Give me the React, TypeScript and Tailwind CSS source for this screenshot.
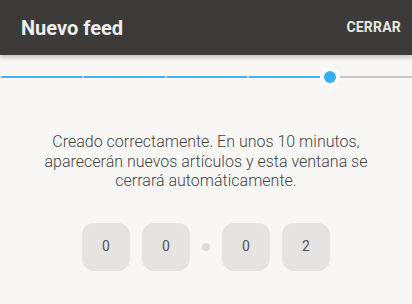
import React from 'react'

const SEGMENTS = 5
const DONE = 4
const DIGITS = ['0', '0', null, '0', '2']

export default function App() {
  return (
    <div
      className="w-[412px] h-[304px] bg-[#f8f7f6] overflow-hidden"
      style={{ fontFamily: 'Roboto, "Noto Sans", sans-serif' }}
    >
      {/* Header */}
      <div className="relative z-10 h-[55px] bg-[#3c3b39] flex items-center justify-between pl-[21px] pr-[11px] shadow-[0_2px_5px_rgba(0,0,0,0.25)]">
        <span className="text-[20px] font-bold text-[#eeeeee]">Nuevo feed</span>
        <span className="text-[14px] font-bold text-[#e6e6e6] tracking-[0.2px]">CERRAR</span>
      </div>

      {/* Progress */}
      <div className="relative mt-[21px] h-[2px] flex">
        {Array.from({ length: SEGMENTS }).map((_, i) => (
          <div key={i} className="flex-1 flex">
            <div className="w-[2px] bg-[#c8c6c4]" />
            <div className={i < DONE ? 'flex-1 bg-[#39b6f2]' : 'flex-1 bg-[#c8c6c4]'} />
          </div>
        ))}
        <div className="absolute left-[320px] top-[-9px] w-[20px] h-[20px] rounded-full bg-white flex items-center justify-center">
          <div className="w-[12px] h-[12px] rounded-full bg-[#35b0f0]" />
        </div>
      </div>

      {/* Message */}
      <p className="mt-[54px] text-center text-[16px] font-light leading-[19.5px] text-[#444] px-[30px]">
        Creado correctamente. En unos 10 minutos, aparecerán nuevos artículos y esta ventana se cerrará automáticamente.
      </p>

      {/* Countdown */}
      <div className="mt-[32px] flex justify-center items-center gap-[12px]">
        {DIGITS.map((d, i) =>
          d === null ? (
            <div key={i} className="w-[8px] h-[8px] rounded-full bg-[#dddcdb]" />
          ) : (
            <div
              key={i}
              className="w-[48px] h-[48px] rounded-[12px] bg-[#e5e4e3] flex items-center justify-center text-[14px] text-[#555]"
            >
              {d}
            </div>
          )
        )}
      </div>
    </div>
  )
}
